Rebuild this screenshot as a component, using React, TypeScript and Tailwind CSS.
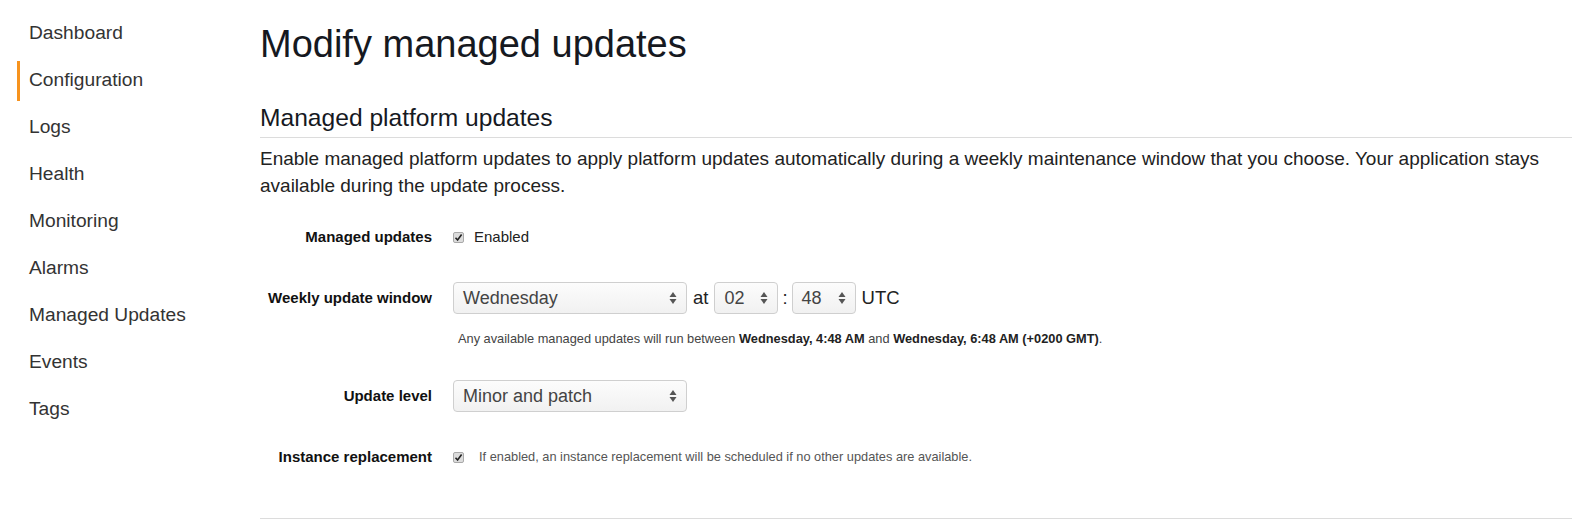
import React from "react";

const navItems = [
  "Dashboard",
  "Configuration",
  "Logs",
  "Health",
  "Monitoring",
  "Alarms",
  "Managed Updates",
  "Events",
  "Tags",
];

function Arrows() {
  return (
    <svg width="8" height="14" viewBox="0 0 8 14" className="shrink-0">
      <path d="M4 1 L7.5 6 H0.5 Z" fill="#555" />
      <path d="M4 13 L7.5 8 H0.5 Z" fill="#555" />
    </svg>
  );
}

function FakeSelect({ value, width }: { value: string; width: string }) {
  return (
    <div
      className={`flex h-[32px] ${width} items-center justify-between rounded-[4px] border border-[#cfcfcf] bg-gradient-to-b from-[#fcfcfc] to-[#f1f1f1] pr-[9px] pl-[9px] text-[18px] text-[#444]`}
    >
      <span>{value}</span>
      <Arrows />
    </div>
  );
}

function Check() {
  return (
    <span className="flex h-[11px] w-[11px] shrink-0 items-center justify-center rounded-[2px] border border-[#a9a9a9] bg-[#dcdcdc]">
      <svg width="9" height="9" viewBox="0 0 9 9">
        <path
          d="M1.5 4.8 L3.6 7 L7.6 1.6"
          fill="none"
          stroke="#222"
          strokeWidth="1.6"
        />
      </svg>
    </span>
  );
}

function Row({
  label,
  className,
  children,
}: {
  label: string;
  className?: string;
  children: React.ReactNode;
}) {
  return (
    <div className={`flex items-center ${className ?? ""}`}>
      <div className="w-[172px] shrink-0 text-right text-[15px] font-bold text-[#111]">
        {label}
      </div>
      <div className="ml-[21px] flex items-center">{children}</div>
    </div>
  );
}

export default function App() {
  return (
    <div className="flex min-h-[529px] bg-white font-['Liberation_Sans',Arial,sans-serif] text-[#222]">
      <nav className="w-[260px] shrink-0 pt-[10px]">
        {navItems.map((item) => (
          <div key={item} className="flex h-[47px] items-center pl-[17px]">
            <span
              className={`h-[40px] w-[3px] ${
                item === "Configuration" ? "bg-[#f7931e]" : "bg-transparent"
              }`}
            />
            <span className="ml-[9px] text-[19.2px] text-[#333]">{item}</span>
          </div>
        ))}
      </nav>

      <main className="mr-[3px] flex-1 pt-[23px]">
        <h1 className="text-[38px] leading-[42px] text-[#16191f]">
          Modify managed updates
        </h1>
        <h2 className="mt-[39px] border-b border-[#dcdcdc] pb-[5px] text-[24.6px] leading-[28px] text-[#16191f]">
          Managed platform updates
        </h2>
        <p className="mt-[7px] text-[19px] leading-[27px] text-[#222]">
          Enable managed platform updates to apply platform updates
          automatically during a weekly maintenance window that you choose.
          Your application stays available during the update process.
        </p>

        <Row label="Managed updates" className="mt-[26px] h-[24px]">
          <Check />
          <span className="ml-[10px] text-[15px] text-[#222]">Enabled</span>
        </Row>

        <Row label="Weekly update window" className="mt-[33px] h-[32px]">
          <FakeSelect value="Wednesday" width="w-[234px]" />
          <span className="mx-[6px] text-[18.5px]">at</span>
          <FakeSelect value="02" width="w-[64px]" />
          <span className="mx-[4px] text-[18.5px]">:</span>
          <FakeSelect value="48" width="w-[64px]" />
          <span className="ml-[6px] text-[18.5px]">UTC</span>
        </Row>

        <p className="mt-[17px] ml-[198px] text-[12.8px] leading-[16px] text-[#444]">
          Any available managed updates will run between{" "}
          <b className="text-[#222]">Wednesday, 4:48 AM</b> and{" "}
          <b className="text-[#222]">Wednesday, 6:48 AM (+0200 GMT)</b>.
        </p>

        <Row label="Update level" className="mt-[33px] h-[32px]">
          <FakeSelect value="Minor and patch" width="w-[234px]" />
        </Row>

        <Row label="Instance replacement" className="mt-[33px] h-[24px]">
          <Check />
          <span className="ml-[15px] text-[12.8px] text-[#555]">
            If enabled, an instance replacement will be scheduled if no other
            updates are available.
          </span>
        </Row>

        <div className="mt-[49px] border-b border-[#dcdcdc]" />
      </main>
    </div>
  );
}
